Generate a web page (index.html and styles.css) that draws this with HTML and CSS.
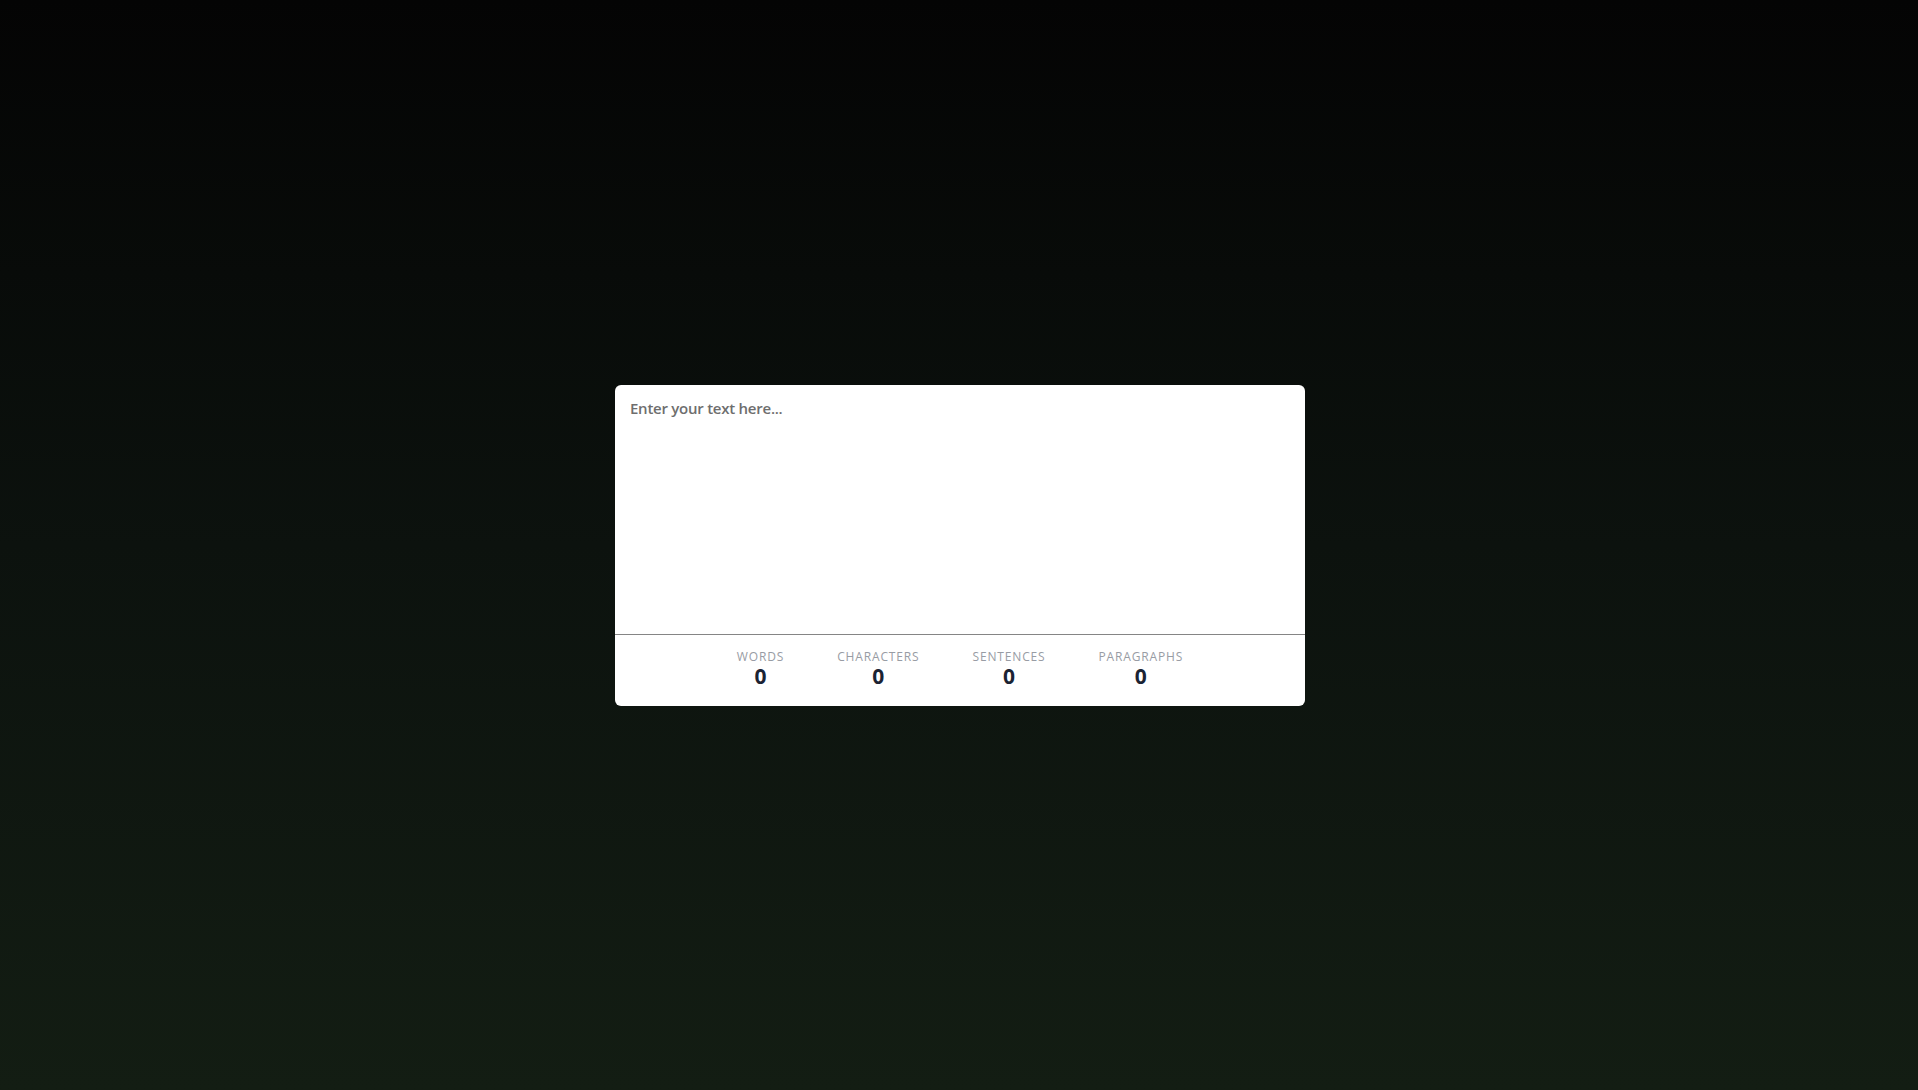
FILE: index.html
```html
<!DOCTYPE html>
<html lang="en">
<head>
<meta charset="utf-8">
<title>Word Counter</title>
<link rel="stylesheet" href="styles.css">
</head>
<body>
<main class="page">
  <section class="card">
    <div class="editor"><span class="placeholder">Enter your text here...</span></div>
    <div class="stats">
      <div class="stat"><span class="label">Words</span><span class="value">0</span></div>
      <div class="stat"><span class="label">Characters</span><span class="value">0</span></div>
      <div class="stat"><span class="label">Sentences</span><span class="value">0</span></div>
      <div class="stat"><span class="label">Paragraphs</span><span class="value">0</span></div>
    </div>
  </section>
</main>
</body>
</html>
```
FILE: styles.css
```css
html, body {
  margin: 0;
  padding: 0;
}
body {
  height: 100vh;
  background: linear-gradient(to bottom, #040404 0%, #0c120e 50%, #131d13 100%);
  font-family: "Open Sans", "Noto Sans", sans-serif;
}
.page {
  height: 100vh;
  display: flex;
  align-items: center;
  justify-content: center;
}
.card {
  width: 690px;
  margin-left: 2px;
  background: #ffffff;
  border-radius: 6px;
  overflow: hidden;
}
.editor {
  height: 250px;
  box-sizing: border-box;
  padding: 13px 15px;
  border-bottom: 1px solid #858585;
  line-height: 20px;
}
.placeholder {
  font-size: 15px;
  font-weight: 600;
  color: #6e6e6e;
  letter-spacing: -0.25px;
}
.stats {
  height: 71px;
  box-sizing: border-box;
  padding-top: 14px;
  display: flex;
  justify-content: center;
  gap: 53px;
}
.stat {
  display: flex;
  flex-direction: column;
  align-items: center;
}
.label {
  font-size: 12px;
  line-height: 15px;
  font-weight: 500;
  text-transform: uppercase;
  letter-spacing: 0.85px;
  color: #989ca4;
}
.value {
  font-size: 21px;
  line-height: 24px;
  font-weight: 700;
  color: #1b2333;
}
```
